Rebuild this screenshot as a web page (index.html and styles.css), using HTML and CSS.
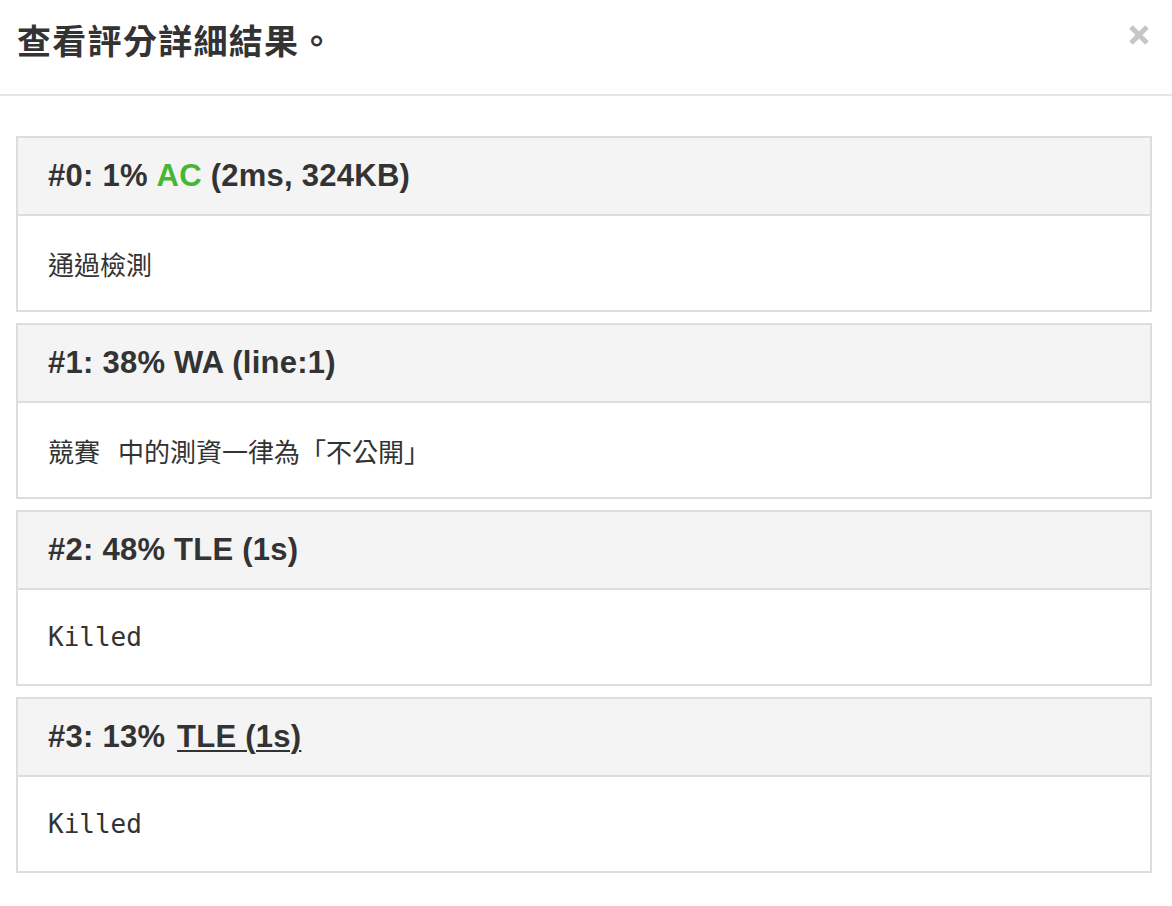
FILE: index.html
```html
<!DOCTYPE html>
<html lang="zh-Hant">
<head>
<meta charset="utf-8">
<title>查看評分詳細結果</title>
<link rel="stylesheet" href="styles.css">
</head>
<body>
<div class="modal">
  <div class="modal-header">
    <h1 class="modal-title">查看評分詳細結果。</h1>
    <button class="close" aria-label="close">
      <svg width="22" height="20" viewBox="0 0 22 20"><path d="M3 2 L19 18 M19 2 L3 18" stroke="#c6c6c6" stroke-width="5" stroke-linecap="butt"/></svg>
    </button>
  </div>
  <div class="modal-body">
    <div class="panel">
      <div class="panel-heading">#0: 1% <span class="ac">AC</span>&nbsp;(2ms, 324KB)</div>
      <div class="panel-body cjk">通過檢測</div>
    </div>
    <div class="panel">
      <div class="panel-heading">#1: 38% WA (line:1)</div>
      <div class="panel-body cjk"><span class="gap">競賽</span>中的測資一律為「不公開」</div>
    </div>
    <div class="panel">
      <div class="panel-heading">#2: 48% TLE (1s)</div>
      <div class="panel-body mono">Killed</div>
    </div>
    <div class="panel">
      <div class="panel-heading">#3: 13% <a class="link" href="#">TLE (1s)</a></div>
      <div class="panel-body mono">Killed</div>
    </div>
  </div>
</div>
</body>
</html>
```

FILE: styles.css
```css
html, body {
  margin: 0;
  padding: 0;
  background: #ffffff;
}

body {
  font-family: "Liberation Sans", "Noto Sans CJK TC", Arial, sans-serif;
  color: #333333;
}

.modal {
  width: 1172px;
}

.modal-header {
  height: 94px;
  border-bottom: 2px solid #e5e5e5;
  display: flex;
  justify-content: space-between;
  align-items: flex-start;
  padding: 0 22px 0 17px;
}

.modal-title {
  margin: 0;
  padding-top: 21px;
  font-family: "Noto Sans CJK TC", "Liberation Sans", sans-serif;
  font-size: 34px;
  line-height: 38px;
  font-weight: 700;
  color: #333333;
  letter-spacing: 1.3px;
}

.close {
  margin-top: 25px;
  padding: 0;
  border: 0;
  background: transparent;
  width: 22px;
  height: 20px;
  display: flex;
}

.modal-body {
  padding: 40px 20px 0 16px;
  display: flex;
  flex-direction: column;
  gap: 11px;
}

.panel {
  border: 2px solid #dddddd;
  background: #ffffff;
}

.panel-heading {
  height: 76px;
  background: #f4f4f4;
  border-bottom: 2px solid #dddddd;
  display: flex;
  align-items: center;
  padding: 0 30px;
  font-family: "Liberation Sans", "Noto Sans CJK TC", Arial, sans-serif;
  font-weight: 700;
  font-size: 31px;
  letter-spacing: 0.25px;
  color: #333333;
  white-space: pre;
}

.ac {
  color: #45b734;
}

.link {
  color: #333333;
  text-decoration: underline;
  text-decoration-thickness: 2px;
  text-underline-offset: 3px;
  margin-left: 3px;
}

.panel-body {
  height: 94px;
  display: flex;
  align-items: center;
  padding: 0 30px;
  color: #333333;
}

.cjk {
  font-family: "Noto Sans CJK TC", sans-serif;
  font-size: 26px;
  white-space: pre;
}

.gap {
  margin-right: 18px;
}

.mono {
  font-family: "DejaVu Sans Mono", "Liberation Mono", monospace;
  font-size: 26px;
}
```
